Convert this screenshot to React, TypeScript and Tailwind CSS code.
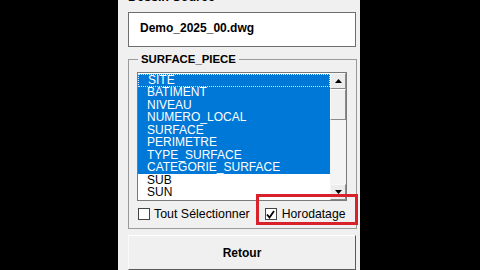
import React from 'react';

const items = [
  'SITE',
  'BATIMENT',
  'NIVEAU',
  'NUMERO_LOCAL',
  'SURFACE',
  'PERIMETRE',
  'TYPE_SURFACE',
  'CATEGORIE_SURFACE',
  'SUB',
  'SUN',
];

const Arrow: React.FC<{ up?: boolean }> = ({ up }) => (
  <svg width="7" height="4" viewBox="0 0 7 4">
    {up ? <polygon points="0,4 7,4 3.5,0" fill="#000" /> : <polygon points="0,0 7,0 3.5,4" fill="#000" />}
  </svg>
);

const ScrollButton: React.FC<{ up?: boolean }> = ({ up }) => (
  <div className="h-[16px] w-full flex items-center justify-center bg-[#ececec] border-t border-l border-t-[#f8f8f8] border-l-[#f8f8f8] border-r border-b border-r-[#8a8a8a] border-b-[#8a8a8a]">
    <Arrow up={up} />
  </div>
);

const Check: React.FC<{ checked?: boolean }> = ({ checked }) => (
  <div className="w-[12px] h-[12px] shrink-0 bg-white border border-[#444] flex items-center justify-center">
    {checked && (
      <svg width="9" height="9" viewBox="0 0 9 9">
        <polyline points="1,4.5 3.5,7.5 8,1" fill="none" stroke="#000" strokeWidth="1.8" />
      </svg>
    )}
  </div>
);

export default function App() {
  return (
    <div className="w-[480px] h-[270px] bg-black flex overflow-hidden" style={{ fontFamily: '"Liberation Sans", Arial, sans-serif' }}>
      <div className="w-[118px] shrink-0" />
      <div className="w-[242px] shrink-0 bg-[#f0f0f0] pl-[10px] pr-[4px] flex flex-col">
        {/* Header label, cut off at top */}
        <div className="-mt-[10px] h-[15px] leading-[15px] text-[12.5px] font-bold text-black">Dessin Source</div>

        {/* File box */}
        <div className="mt-[7px] w-[228px] h-[35px] bg-white border border-[#6e6e6e] pl-[11px] pt-[2px]">
          <span className="text-[12px] leading-[14px] font-bold text-black">Demo_2025_00.dwg</span>
        </div>

        {/* Group box */}
        <div className="relative mt-[12px] w-[229px] border border-[#9a9a9a] pt-[12px] px-[8px]">
          <div className="absolute -top-[8px] left-[9px] px-[3px] bg-[#f0f0f0] text-[11.4px] leading-[15px] font-bold text-black">
            SURFACE_PIECE
          </div>

          {/* List box */}
          <div className="h-[129px] w-[210px] bg-white border border-[#7a7a7a] flex">
            <div className="flex-1 pt-[1px]">
              {items.map((it, i) => (
                <div
                  key={it}
                  className={`h-[12.5px] pl-[9px] pb-[1.5px] flex items-center text-[12px] leading-[12px] whitespace-nowrap ${
                    i < 8 ? 'bg-[#0078d7] text-white' : 'text-black'
                  } ${i === 0 ? 'border border-dotted border-[#d8e8ff] pl-[8px]' : ''}`}
                >
                  {it}
                </div>
              ))}
            </div>
            <div className="w-[16px] flex flex-col bg-[#f4f4f4]">
              <ScrollButton up />
              <div className="h-[31px] bg-[#f0f0f0] border-t border-l border-t-white border-l-white border-r border-b border-r-[#8a8a8a] border-b-[#8a8a8a]" />
              <div className="flex-1" />
              <ScrollButton />
            </div>
          </div>

          {/* Checkbox row */}
          <div className="h-[27px] flex items-center">
            <div className="flex items-center ml-[1px]">
              <Check />
              <span className="ml-[4px] text-[12.4px] text-black whitespace-nowrap">Tout Sélectionner</span>
            </div>
            <div className="relative flex items-center ml-[15px]">
              <Check checked />
              <span className="ml-[5px] text-[12.2px] text-black whitespace-nowrap">Horodatage</span>
              <div className="absolute -left-[9px] -top-[11px] w-[102px] h-[31px] border-[3px] border-[#d9212b]" />
            </div>
          </div>
        </div>

        {/* Button */}
        <div className="mt-[6px] w-[228px] h-[35px] bg-[#f0f0f0] border-t border-l border-t-white border-l-[#fafafa] border-r border-b border-r-[#5a5a5a] border-b-[#5a5a5a] flex items-center justify-center">
          <span className="text-[12px] font-bold text-black">Retour</span>
        </div>
      </div>
      <div className="flex-1" />
    </div>
  );
}
